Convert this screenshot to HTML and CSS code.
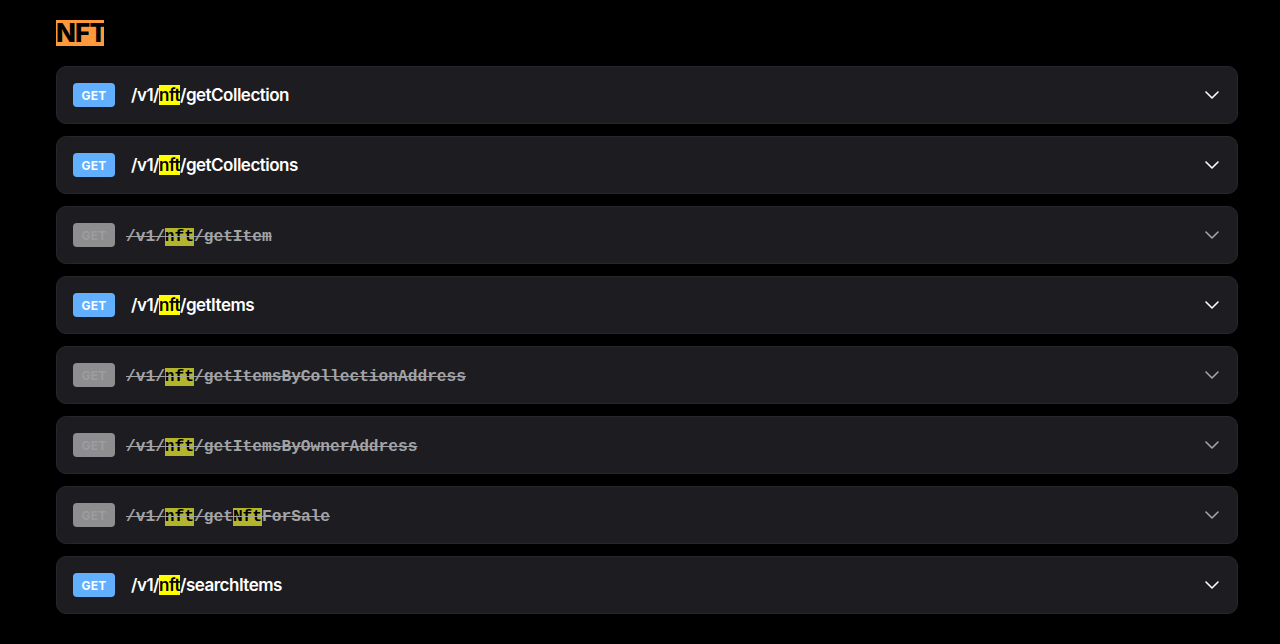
FILE: index.html
```html
<!DOCTYPE html>
<html>
<head>
<meta charset="utf-8">
<link rel="stylesheet" href="styles.css">
</head>
<body>
<div class="page">
  <h2 class="section-title"><mark class="hl-title">NFT</mark></h2>
  <div class="list">
    <div class="op">
      <span class="badge">GET</span>
      <span class="path">/v1/<mark class="hl">nft</mark>/getCollection</span>
      <svg class="chev" width="16" height="16" viewBox="0 0 16 16"><path d="M2 5l6 6 6-6" fill="none" stroke="#fff" stroke-width="1.6" stroke-linecap="round" stroke-linejoin="round"/></svg>
    </div>
    <div class="op">
      <span class="badge">GET</span>
      <span class="path">/v1/<mark class="hl">nft</mark>/getCollections</span>
      <svg class="chev" width="16" height="16" viewBox="0 0 16 16"><path d="M2 5l6 6 6-6" fill="none" stroke="#fff" stroke-width="1.6" stroke-linecap="round" stroke-linejoin="round"/></svg>
    </div>
    <div class="op deprecated">
      <span class="badge">GET</span>
      <span class="path">/v1/<mark class="hl">nft</mark>/getItem</span>
      <svg class="chev" width="16" height="16" viewBox="0 0 16 16"><path d="M2 5l6 6 6-6" fill="none" stroke="#fff" stroke-width="1.6" stroke-linecap="round" stroke-linejoin="round"/></svg>
    </div>
    <div class="op">
      <span class="badge">GET</span>
      <span class="path">/v1/<mark class="hl">nft</mark>/getItems</span>
      <svg class="chev" width="16" height="16" viewBox="0 0 16 16"><path d="M2 5l6 6 6-6" fill="none" stroke="#fff" stroke-width="1.6" stroke-linecap="round" stroke-linejoin="round"/></svg>
    </div>
    <div class="op deprecated">
      <span class="badge">GET</span>
      <span class="path">/v1/<mark class="hl">nft</mark>/getItemsByCollectionAddress</span>
      <svg class="chev" width="16" height="16" viewBox="0 0 16 16"><path d="M2 5l6 6 6-6" fill="none" stroke="#fff" stroke-width="1.6" stroke-linecap="round" stroke-linejoin="round"/></svg>
    </div>
    <div class="op deprecated">
      <span class="badge">GET</span>
      <span class="path">/v1/<mark class="hl">nft</mark>/getItemsByOwnerAddress</span>
      <svg class="chev" width="16" height="16" viewBox="0 0 16 16"><path d="M2 5l6 6 6-6" fill="none" stroke="#fff" stroke-width="1.6" stroke-linecap="round" stroke-linejoin="round"/></svg>
    </div>
    <div class="op deprecated">
      <span class="badge">GET</span>
      <span class="path">/v1/<mark class="hl">nft</mark>/get<mark class="hl">Nft</mark>ForSale</span>
      <svg class="chev" width="16" height="16" viewBox="0 0 16 16"><path d="M2 5l6 6 6-6" fill="none" stroke="#fff" stroke-width="1.6" stroke-linecap="round" stroke-linejoin="round"/></svg>
    </div>
    <div class="op">
      <span class="badge">GET</span>
      <span class="path">/v1/<mark class="hl">nft</mark>/searchItems</span>
      <svg class="chev" width="16" height="16" viewBox="0 0 16 16"><path d="M2 5l6 6 6-6" fill="none" stroke="#fff" stroke-width="1.6" stroke-linecap="round" stroke-linejoin="round"/></svg>
    </div>
  </div>
</div>
</body>
</html>
```
FILE: styles.css
```css
html, body {
  margin: 0;
  padding: 0;
  background: #000;
  font-family: Inter, "Liberation Sans", Arial, sans-serif;
  color: #fff;
}
.page {
  padding: 20px 42px 0 56px;
}
.section-title {
  margin: 0 0 20px 0;
  font-size: 26px;
  line-height: 26px;
  font-weight: 800;
  height: 26px;
  display: flex;
}
.hl-title {
  display: block;
  background: #ff9a3c;
  color: #000;
  width: 48px;
  text-align: center;
  letter-spacing: -0.8px;
}
.list {
  display: flex;
  flex-direction: column;
  gap: 12px;
}
.op {
  display: flex;
  align-items: center;
  height: 58px;
  box-sizing: border-box;
  padding: 0 17px 0 16px;
  background: #1c1c21;
  border: 1px solid #26262c;
  border-radius: 10px;
}
.badge {
  display: inline-flex;
  align-items: center;
  justify-content: center;
  width: 42px;
  height: 24px;
  border-radius: 4px;
  background: #61affe;
  color: #fff;
  font-size: 12px;
  font-weight: 700;
  letter-spacing: 0.2px;
  flex: none;
}
.path {
  margin-left: 16px;
  font-size: 17px;
  font-weight: 600;
  letter-spacing: -0.5px;
  color: #fff;
  flex: 1;
}
.hl {
  background: #ffff00;
  color: #000;
}
.chev {
  flex: none;
}
.deprecated .badge {
  background: #8e8e91;
  color: #9d9d9f;
}
.deprecated .path {
  margin-left: 11px;
  padding-top: 4px;
  font-family: "Liberation Mono", "DejaVu Sans Mono", monospace;
  font-weight: 700;
  font-size: 16.2px;
  letter-spacing: 0;
  color: #a3a3a6;
  text-decoration: line-through;
  text-decoration-color: #a3a3a6;
}
.deprecated .hl {
  background: #b3b52c;
  color: #000;
}
.deprecated .chev {
  opacity: 0.6;
}
```
